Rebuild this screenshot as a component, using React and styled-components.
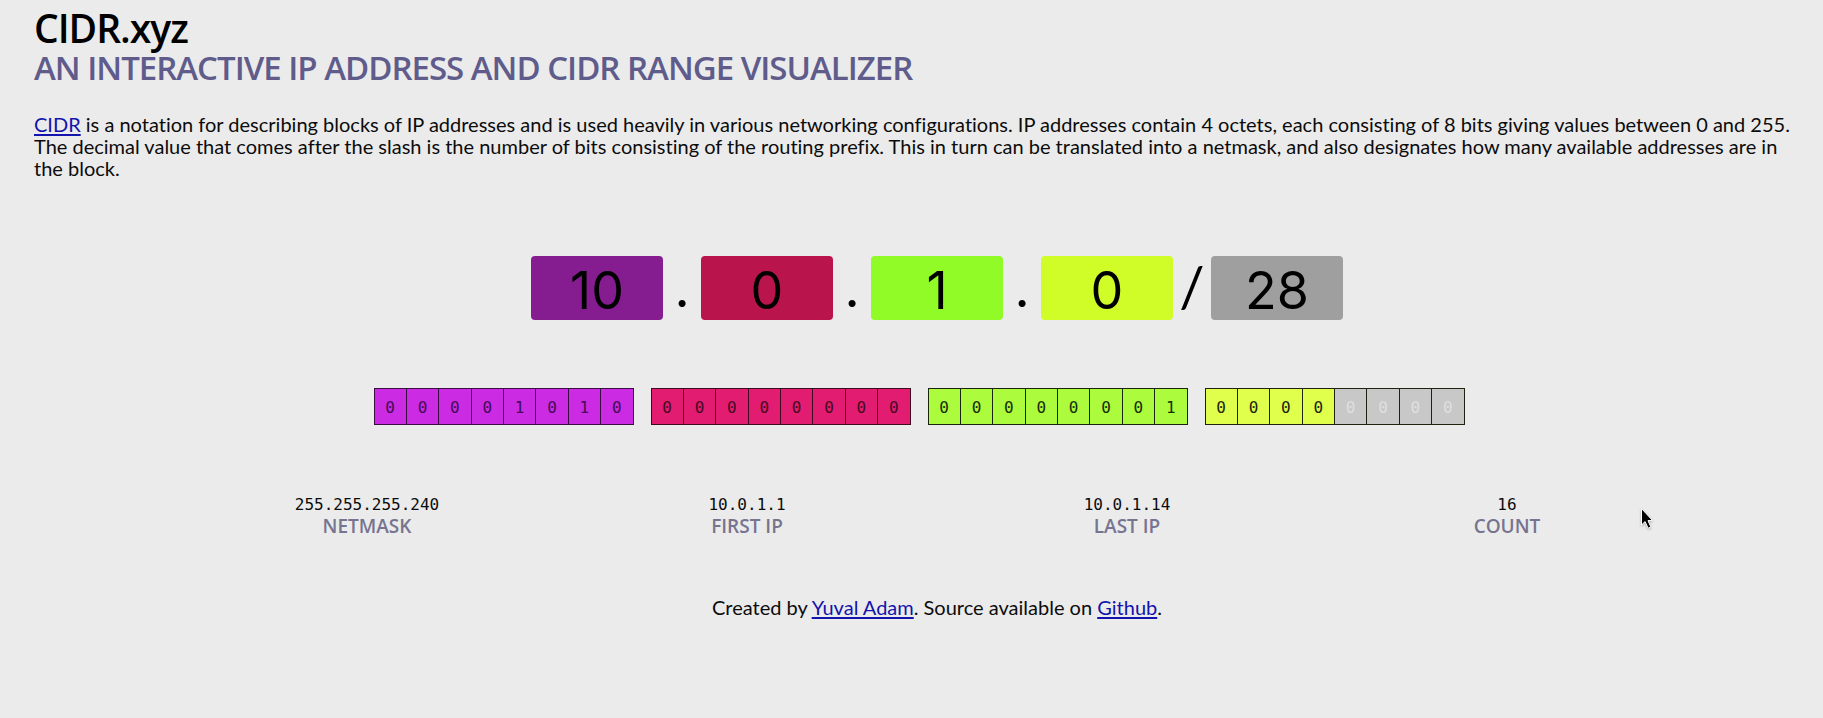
import React from "react";
import styled, { createGlobalStyle } from "styled-components";

const GlobalStyle = createGlobalStyle`
  *, *::before, *::after { box-sizing: border-box; }
  body {
    margin: 0;
    background: #ebebeb;
    color: #0c0c0c;
    font-family: Lato, "Noto Sans", sans-serif;
    font-size: 20px;
    line-height: 22px;
    font-variant-ligatures: none;
  }
`;

const Page = styled.div`
  min-height: 100vh;
`;

const Header = styled.header`
  padding: 7px 24px 0 34px;
`;

const Title = styled.h1`
  margin: 0;
  color: #000;
  font-family: "Open Sans", sans-serif;
  font-size: 39px;
  line-height: 41px;
  font-weight: 600;
  letter-spacing: -1px;
`;

const Subtitle = styled.h2`
  margin: 0;
  color: #5f5c8b;
  font-family: "Open Sans", sans-serif;
  font-size: 33px;
  line-height: 40px;
  font-weight: 600;
  letter-spacing: -1px;
  text-transform: uppercase;
`;

const Intro = styled.p`
  margin: 25px 0 0;
`;

const Link = styled.a`
  color: #1313ad;
  text-underline-offset: 2px;
`;

const Main = styled.main`
  padding: 77px 0 0 51px;
`;

const AddressForm = styled.form`
  display: flex;
  justify-content: center;
`;

const AddressInput = styled.input`
  width: 132px;
  height: 64px;
  padding: 4px 0 0;
  border: 0;
  border-radius: 4px;
  background: ${(p) => p.$fill};
  color: #000;
  font-family: Inter, sans-serif;
  font-size: 52px;
  text-align: center;
`;

const Separator = styled.span`
  width: 38px;
  font-size: 56px;
  line-height: 60px;
  text-align: center;
  color: #000;
`;

const BitRow = styled.div`
  display: flex;
  justify-content: center;
  gap: 17px;
  margin-top: 68px;
  padding-right: 36px;
`;

const Octet = styled.div`
  display: flex;
  width: 260px;
  height: 37px;
  border: solid ${(p) => p.$line};
  border-width: 1px 0 1px 1px;
`;

const Bit = styled.span`
  flex: 1;
  border-right: 1px solid ${(p) => p.$line};
  background: ${(p) => (p.$host ? "#c8c8c8" : p.$fill)};
  color: ${(p) => (p.$host ? "#dfdfdf" : p.$ink)};
  font-family: "DejaVu Sans Mono", monospace;
  font-size: 16px;
  line-height: 37px;
  text-align: center;
`;

const Stats = styled.dl`
  display: grid;
  grid-template-columns: repeat(4, 1fr);
  margin: 69px 0 0;
  padding: 0 126px;
`;

const Stat = styled.div`
  display: flex;
  flex-direction: column-reverse;
  align-items: center;
`;

const StatLabel = styled.dt`
  color: #76748f;
  font-family: "Open Sans", sans-serif;
  font-size: 19px;
  font-weight: 600;
  line-height: 20px;
  text-transform: uppercase;
`;

const StatValue = styled.dd`
  margin: 0;
  font-family: "DejaVu Sans Mono", monospace;
  font-size: 16px;
`;

const Footer = styled.footer`
  margin-top: 60px;
  text-align: center;
`;

const Pointer = styled.svg`
  position: absolute;
  left: 1640px;
  top: 507px;
  pointer-events: none;
  filter: drop-shadow(0 1px 1px #0004);
`;

const octets = [
  { value: 10, input: "#851d91", fill: "#cb2be3", ink: "#440a56", line: "#3c0c44" },
  { value: 0, input: "#b9154c", fill: "#e21c70", ink: "#480822", line: "#3e0a20" },
  { value: 1, input: "#90fb26", fill: "#acfb3d", ink: "#172c08", line: "#18240c" },
  { value: 0, input: "#d0fc28", fill: "#dfff4c", ink: "#20240c", line: "#20220f" },
];

const prefix = 28;

const stats = [
  ["Netmask", "255.255.255.240"],
  ["First IP", "10.0.1.1"],
  ["Last IP", "10.0.1.14"],
  ["Count", "16"],
];

export default function App() {
  return (
    <Page>
      <GlobalStyle />
      <Header>
        <Title>CIDR.xyz</Title>
        <Subtitle>An interactive IP address and CIDR range visualizer</Subtitle>
        <Intro>
          <Link href="#cidr">CIDR</Link> is a notation for describing blocks of IP addresses and is
          used heavily in various networking configurations. IP addresses contain 4 octets, each
          consisting of 8 bits giving values between 0 and 255. The decimal value that comes after
          the slash is the number of bits consisting of the routing prefix. This in turn can be
          translated into a netmask, and also designates how many available addresses are in the
          block.
        </Intro>
      </Header>
      <Main>
        <AddressForm>
          {octets.map((o, i) => (
            <React.Fragment key={i}>
              <AddressInput aria-label={`Octet ${i + 1}`} defaultValue={o.value} $fill={o.input} />
              <Separator>{i < 3 ? "." : "/"}</Separator>
            </React.Fragment>
          ))}
          <AddressInput aria-label="Prefix length" defaultValue={prefix} $fill="#9f9f9f" />
        </AddressForm>
        <BitRow>
          {octets.map((o, i) => (
            <Octet key={i} $line={o.line}>
              {o.value
                .toString(2)
                .padStart(8, "0")
                .split("")
                .map((bit, j) => (
                  <Bit key={j} $fill={o.fill} $ink={o.ink} $line={o.line} $host={i * 8 + j >= prefix}>
                    {bit}
                  </Bit>
                ))}
            </Octet>
          ))}
        </BitRow>
        <Stats>
          {stats.map(([label, value]) => (
            <Stat key={label}>
              <StatLabel>{label}</StatLabel>
              <StatValue>{value}</StatValue>
            </Stat>
          ))}
        </Stats>
        <Footer>
          Created by <Link href="#author">Yuval Adam</Link>. Source available on{" "}
          <Link href="#source">Github</Link>.
        </Footer>
      </Main>
      <Pointer width="14" height="24" viewBox="0 0 14 24" aria-hidden="true">
        <path
          d="M1.5 1.5V18l3.6-3.4 3 6.6 2.8-1.2-2.9-6.4h4.6z"
          fill="#000"
          stroke="#fff"
          strokeWidth="1"
        />
      </Pointer>
    </Page>
  );
}
